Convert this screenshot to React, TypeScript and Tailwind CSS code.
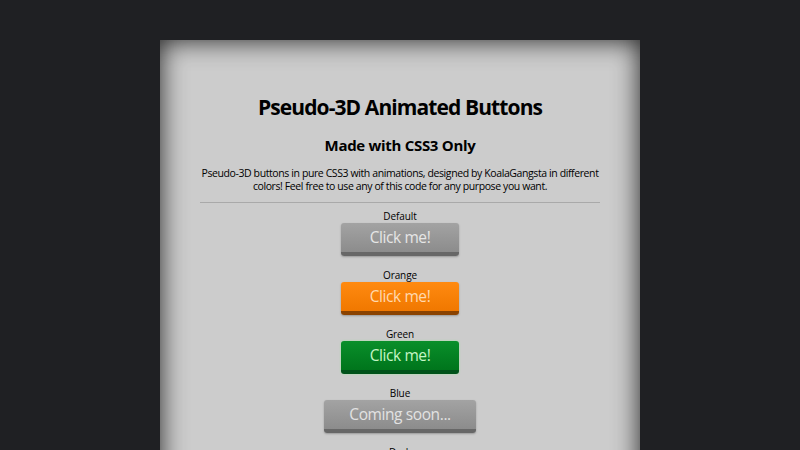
import React from 'react';

type Variant = 'default' | 'orange' | 'green' | 'blue' | 'dark';

const styles: Record<Variant, string> = {
  default:
    'bg-gradient-to-b from-[#a3a3a3] to-[#8c8c8c] border-b-[#676767] text-[#e6e6e6] shadow-[0_1px_2px_rgba(0,0,0,0.25)]',
  orange:
    'bg-gradient-to-b from-[#ff8a10] to-[#f07800] border-b-[#8a4200] text-[#ffd9b0] shadow-[0_1px_2px_rgba(0,0,0,0.25)]',
  green:
    'bg-gradient-to-b from-[#0a8f2a] to-[#00751c] border-b-[#00521a] text-[#c6f5c6] shadow-[0_0_2px_rgba(120,255,120,0.6)]',
  blue:
    'bg-gradient-to-b from-[#a3a3a3] to-[#8c8c8c] border-b-[#676767] text-[#e2e2e2] shadow-[0_1px_2px_rgba(0,0,0,0.25)]',
  dark:
    'bg-gradient-to-b from-[#444] to-[#2a2a2a] border-b-[#111] text-[#ddd] shadow-[0_1px_2px_rgba(0,0,0,0.25)]',
};

function PseudoButton({ variant, label, wide }: { variant: Variant; label: string; wide?: boolean }) {
  return (
    <button
      className={`h-[33px] ${wide ? 'w-[152px]' : 'w-[118px]'} rounded-[3px] border-b-4 text-[15.5px] tracking-[-0.4px] leading-[29px] ${styles[variant]}`}
    >
      {label}
    </button>
  );
}

const demos: { name: string; variant: Variant; label: string; wide?: boolean }[] = [
  { name: 'Default', variant: 'default', label: 'Click me!' },
  { name: 'Orange', variant: 'orange', label: 'Click me!' },
  { name: 'Green', variant: 'green', label: 'Click me!' },
  { name: 'Blue', variant: 'blue', label: 'Coming soon...', wide: true },
  { name: 'Dark', variant: 'dark', label: 'Coming soon...', wide: true },
];

export default function App() {
  return (
    <div
      className="min-h-screen bg-[#1f2023] flex justify-center pt-[40px]"
      style={{ fontFamily: '"Open Sans", "Noto Sans", sans-serif' }}
    >
      <div className="w-[480px] min-h-[500px] bg-[#cccccc] shadow-[inset_0_0_26px_rgba(0,0,0,0.85)] text-center text-black pt-[52px]">
        <h1 className="text-[21px] font-bold leading-[30px] tracking-[-0.9px]">Pseudo-3D Animated Buttons</h1>
        <h2 className="mt-[13px] text-[15px] font-bold leading-[20px] tracking-[-0.3px]">Made with CSS3 Only</h2>
        <p className="mt-[12px] mx-[36px] text-[10.5px] leading-[13px] tracking-[-0.4px]">
          Pseudo-3D buttons in pure CSS3 with animations, designed by KoalaGangsta in different colors! Feel
          free to use any of this code for any purpose you want.
        </p>
        <hr className="mx-[40px] mt-[9px] border-t border-[#a9a9a9]" />
        <div className="flex flex-col items-center pt-[6px]">
          {demos.map((d) => (
            <div key={d.name} className="flex flex-col items-center h-[59px]">
              <span className="text-[10px] leading-[14px] tracking-[-0.1px]">{d.name}</span>
              <PseudoButton variant={d.variant} label={d.label} wide={d.wide} />
            </div>
          ))}
        </div>
      </div>
    </div>
  );
}
